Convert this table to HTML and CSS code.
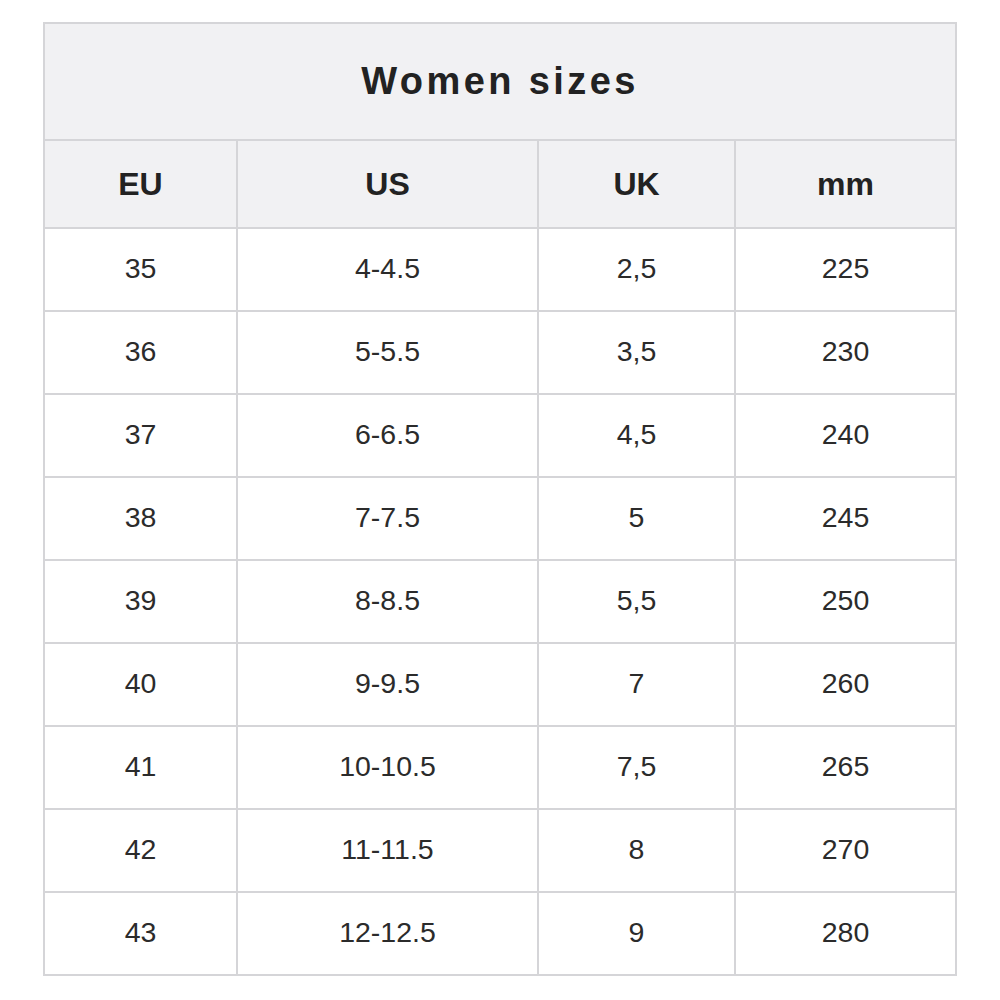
FILE: index.html
```html
<!DOCTYPE html>
<html>
<head>
<meta charset="utf-8">
<link rel="stylesheet" href="styles.css">
</head>
<body>
<div class="page">
<table class="sizes">
<colgroup>
<col class="c1"><col class="c2"><col class="c3"><col class="c4">
</colgroup>
<thead>
<tr class="title-row"><th colspan="4" class="title">Women sizes</th></tr>
<tr class="head-row"><th>EU</th><th>US</th><th>UK</th><th>mm</th></tr>
</thead>
<tbody>
<tr><td>35</td><td>4-4.5</td><td>2,5</td><td>225</td></tr>
<tr><td>36</td><td>5-5.5</td><td>3,5</td><td>230</td></tr>
<tr><td>37</td><td>6-6.5</td><td>4,5</td><td>240</td></tr>
<tr><td>38</td><td>7-7.5</td><td>5</td><td>245</td></tr>
<tr><td>39</td><td>8-8.5</td><td>5,5</td><td>250</td></tr>
<tr><td>40</td><td>9-9.5</td><td>7</td><td>260</td></tr>
<tr><td>41</td><td>10-10.5</td><td>7,5</td><td>265</td></tr>
<tr><td>42</td><td>11-11.5</td><td>8</td><td>270</td></tr>
<tr><td>43</td><td>12-12.5</td><td>9</td><td>280</td></tr>
</tbody>
</table>
</div>
</body>
</html>
```
FILE: styles.css
```css
html, body {
  margin: 0;
  padding: 0;
  background: #ffffff;
}
.page {
  padding: 22px 43px;
}
.sizes {
  width: 912px;
  border-collapse: collapse;
  table-layout: fixed;
  font-family: "Liberation Sans", Arial, sans-serif;
  color: #2b2b2b;
}
.c1 { width: 193px; }
.c2 { width: 301px; }
.c3 { width: 197px; }
.c4 { width: 221px; }
.sizes th, .sizes td {
  border: 2px solid #d5d5d8;
  text-align: center;
  padding: 0;
}
.title-row th {
  height: 115px;
  background: #f1f1f3;
  font-size: 38px;
  font-weight: bold;
  letter-spacing: 3.4px;
  color: #222222;
}
.head-row th {
  height: 86px;
  background: #f1f1f3;
  font-size: 32px;
  font-weight: bold;
  color: #222222;
}
.sizes td {
  height: 79px;
  font-size: 28.5px;
  background: #ffffff;
  padding-bottom: 2px;
}
```
